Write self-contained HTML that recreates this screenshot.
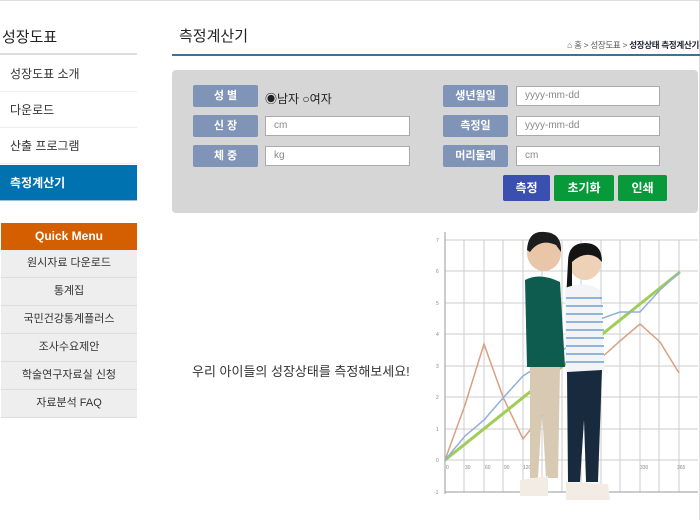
<!DOCTYPE html>
<html><head><meta charset="utf-8"><style>
*{margin:0;padding:0;box-sizing:border-box}
body{width:700px;height:520px;background:#fff;position:relative;overflow:hidden;font-family:"Liberation Sans","Noto Sans CJK KR",sans-serif;color:#333}
.a{position:absolute}
.frame{left:0;top:0;width:700px;height:520px;border:1px solid #ddd;border-left:none;border-bottom:none}
.mi{left:0;width:137px;height:36px;border-bottom:1px solid #eee;font-size:12px;line-height:36px;padding-left:10px;color:#333}
.qi{left:1px;width:136px;height:28px;background:#eeeeee;border-bottom:1px solid #ddd;font-size:11px;line-height:27px;text-align:center;color:#333}
.lb{width:65px;height:22px;background:#7f94b7;color:#fff;font-size:11px;font-weight:bold;text-align:center;line-height:22px;border-radius:2px}
.in{height:20px;background:#fff;border:1px solid #aaa;font-size:10px;color:#888;line-height:18px;padding-left:8px}
.bt{height:26px;color:#fff;font-size:12px;font-weight:bold;text-align:center;line-height:26px;border-radius:2px}
</style></head><body>
<div class="a frame"></div>
<div class="a" style="left:2px;top:26px;font-size:15px;color:#222">성장도표</div>
<div class="a" style="left:0;top:53px;width:137px;height:2px;background:#ddd"></div>
<div class="a mi" style="top:56px">성장도표 소개</div>
<div class="a mi" style="top:92px">다운로드</div>
<div class="a mi" style="top:128px">산출 프로그램</div>
<div class="a mi" style="top:165px;background:#0072b0;color:#fff;font-weight:bold;border-bottom:1px solid #9bbfd6">측정계산기</div>
<div class="a" style="left:1px;top:223px;width:136px;height:27px;background:#d35f00;color:#fff;font-weight:bold;font-size:12px;text-align:center;line-height:27px">Quick Menu</div>
<div class="a qi" style="top:250px">원시자료 다운로드</div>
<div class="a qi" style="top:278px">통계집</div>
<div class="a qi" style="top:306px">국민건강통계플러스</div>
<div class="a qi" style="top:334px">조사수요제안</div>
<div class="a qi" style="top:362px">학술연구자료실 신청</div>
<div class="a qi" style="top:390px">자료분석 FAQ</div>

<div class="a" style="left:179px;top:25px;font-size:15px;color:#222">측정계산기</div>
<div class="a" style="right:1px;top:39px;font-size:8.5px;color:#555;white-space:nowrap;letter-spacing:-0.3px">⌂ 홈 ˃ 성장도표 ˃ <b style="color:#223">성장상태 측정계산기</b></div>
<div class="a" style="left:172px;top:54px;width:528px;height:2px;background:#3b7393"></div>

<div class="a" style="left:172px;top:70px;width:526px;height:143px;background:#d6d6d6;border-radius:4px"></div>
<div class="a lb" style="left:193px;top:85px">성 별</div>
<div class="a" style="left:265px;top:90px;font-size:12px;color:#222">◉남자 ○여자</div>
<div class="a lb" style="left:193px;top:115px">신 장</div>
<div class="a in" style="left:265px;top:116px;width:145px">cm</div>
<div class="a lb" style="left:193px;top:145px">체 중</div>
<div class="a in" style="left:265px;top:146px;width:145px">kg</div>
<div class="a lb" style="left:443px;top:85px">생년월일</div>
<div class="a in" style="left:516px;top:86px;width:144px">yyyy-mm-dd</div>
<div class="a lb" style="left:443px;top:115px">측정일</div>
<div class="a in" style="left:516px;top:116px;width:144px">yyyy-mm-dd</div>
<div class="a lb" style="left:443px;top:145px">머리둘레</div>
<div class="a in" style="left:516px;top:146px;width:144px">cm</div>
<div class="a bt" style="left:503px;top:175px;width:47px;background:#3b4fb0">측정</div>
<div class="a bt" style="left:554px;top:175px;width:60px;background:#089a3a">초기화</div>
<div class="a bt" style="left:618px;top:175px;width:49px;background:#089a3a">인쇄</div>

<div class="a" style="left:192px;top:361px;font-size:13px;color:#333">우리 아이들의 성장상태를 측정해보세요!</div>

<svg class="a" style="left:420px;top:220px" width="280" height="300" viewBox="420 220 280 300">
<g stroke="#ccc" stroke-width="1">
<line x1="445" y1="240" x2="698" y2="240"/><line x1="445" y1="271" x2="698" y2="271"/><line x1="445" y1="303" x2="698" y2="303"/><line x1="445" y1="334" x2="698" y2="334"/><line x1="445" y1="366" x2="698" y2="366"/><line x1="445" y1="397" x2="698" y2="397"/><line x1="445" y1="429" x2="698" y2="429"/><line x1="445" y1="460" x2="698" y2="460"/>
<line x1="464" y1="240" x2="464" y2="492"/><line x1="484" y1="240" x2="484" y2="492"/><line x1="503" y1="240" x2="503" y2="492"/><line x1="523" y1="240" x2="523" y2="492"/><line x1="542" y1="240" x2="542" y2="492"/><line x1="562" y1="240" x2="562" y2="492"/><line x1="581" y1="240" x2="581" y2="492"/><line x1="601" y1="240" x2="601" y2="492"/><line x1="620" y1="240" x2="620" y2="492"/><line x1="640" y1="240" x2="640" y2="492"/><line x1="659" y1="240" x2="659" y2="492"/><line x1="679" y1="240" x2="679" y2="492"/>
</g>
<line x1="445" y1="232" x2="445" y2="494" stroke="#999"/><line x1="445" y1="492" x2="698" y2="492" stroke="#999"/>
<g font-size="5" fill="#888"><text x="436" y="242">7</text><text x="436" y="273">6</text><text x="436" y="305">5</text><text x="436" y="336">4</text><text x="436" y="368">3</text><text x="436" y="399">2</text><text x="436" y="431">1</text><text x="436" y="462">0</text><text x="434" y="494">-1</text>
<text x="446" y="469">0</text><text x="465" y="469">30</text><text x="485" y="469">60</text><text x="504" y="469">90</text><text x="523" y="469">120</text><text x="640" y="469">330</text><text x="677" y="469">365</text></g>
<polyline points="445,460 465,405 484,344 503,397 523,439 542,415" fill="none" stroke="#d9a080" stroke-width="1.5"/>
<polyline points="600,359 620,341 640,324 660,342 679,373" fill="none" stroke="#d9a080" stroke-width="1.5"/>
<line x1="445" y1="460" x2="680" y2="272" stroke="#9fcd55" stroke-width="3"/>
<polyline points="445,460 465,436 484,420 503,398 523,376 562,351 600,319 620,312 640,312 660,290 680,272" fill="none" stroke="#8fb0d8" stroke-width="1.5"/>
<!-- boy -->
<ellipse cx="544" cy="253" rx="17" ry="18" fill="#e9c6a8"/>
<path d="M527 250 Q528 230 545 232 Q562 233 561 252 L556 245 Q540 238 530 252Z" fill="#1d1d1d"/>
<path d="M525 280 Q540 272 560 282 L565 367 L527 367Z" fill="#0e5c4f"/>
<path d="M530 367 L560 367 L558 478 L546 478 L542 410 L538 478 L530 478Z" fill="#d8c9b3"/>
<path d="M520 480 L548 476 L548 496 L520 496Z" fill="#f2ece4"/>
<!-- girl -->
<ellipse cx="585" cy="263" rx="16" ry="17" fill="#efd1b8"/>
<path d="M568 262 Q568 243 585 243 Q602 243 602 262 L598 258 Q585 250 572 262 L572 300 L566 300Z" fill="#141414"/>
<path d="M565 288 Q585 280 600 290 L605 370 L566 372Z" fill="#f2f4f8"/>
<g stroke="#6f9ed0" stroke-width="1.5"><line x1="566" y1="298" x2="602" y2="298"/><line x1="566" y1="306" x2="603" y2="306"/><line x1="566" y1="314" x2="603" y2="314"/><line x1="566" y1="322" x2="603" y2="322"/><line x1="566" y1="330" x2="604" y2="330"/><line x1="566" y1="338" x2="604" y2="338"/><line x1="566" y1="346" x2="604" y2="346"/><line x1="566" y1="354" x2="604" y2="354"/><line x1="566" y1="362" x2="604" y2="362"/></g>
<path d="M567 372 L602 370 L598 482 L586 482 L584 420 L580 482 L568 482Z" fill="#182b3e"/>
<path d="M566 482 L608 484 L610 500 L566 500Z" fill="#f2ece4"/>
</svg>
</body></html>
